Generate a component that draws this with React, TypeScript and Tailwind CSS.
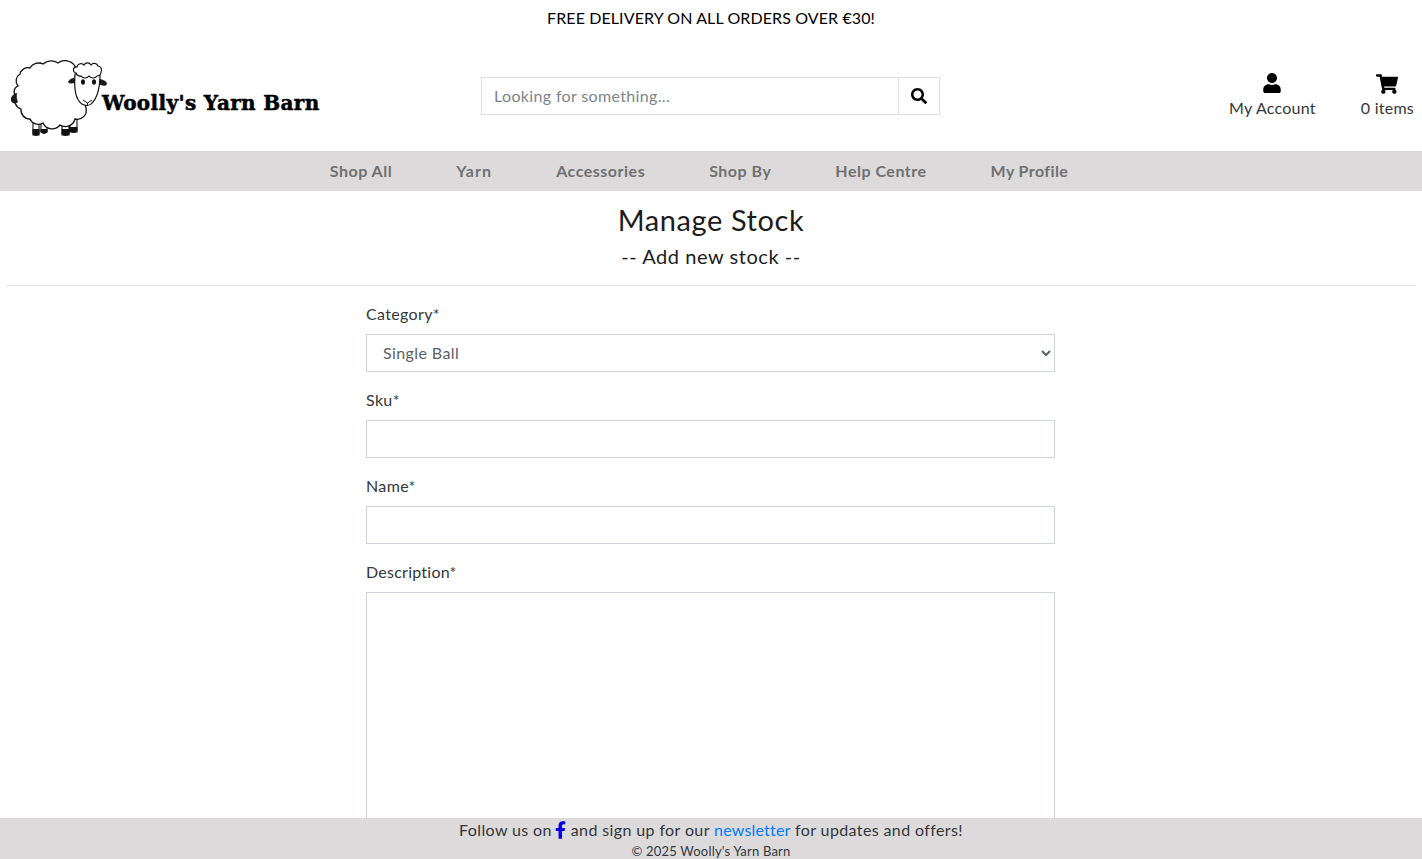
import { FaUser, FaShoppingCart, FaSearch, FaFacebookF } from "react-icons/fa";

const font = "font-['Lato','Noto_Sans',sans-serif]";

function Sheep() {
  return (
    <svg width="100" height="80" viewBox="0 0 100 80" className="shrink-0 overflow-visible">
      <path d="M24 56 L24 75 H30 L30 58 Z M32 58 L32 72 H38 L38 60 Z M53 60 L53 75 H60 L60 60 Z M61 58 L61 72 H68 L68 56 Z" fill="#fff" stroke="#111" strokeWidth="1.1" />
      <path d="M23.5 69 h7 v5 q-3.5 4 -7 0Z M31.5 69 h7 v3 q-3.5 4 -7 0Z M52.5 69 h8 v5 q-4 4 -8 0Z M60.5 67 h8 v4 q-4 4 -8 0Z" fill="#111" />
      <path d="M66 6 A12 12 0 0 0 49 3 A12 12 0 0 0 34 4 A10 10 0 0 0 21 8 A8 8 0 0 0 11 14 A8 8 0 0 0 9 26 A6 6 0 0 0 7 36 A9 9 0 0 0 12 49 A9 9 0 0 0 21 59 A9 9 0 0 0 34 63 A10 10 0 0 0 51 65 A10 10 0 0 0 66 59 A9 9 0 0 0 77 48 L72 20 Z" fill="#fff" stroke="#111" strokeWidth="1.3" />
      <path d="M2 38 C3 35 6 33 8 33 C7 36 8 40 9 42 C6 45 1 43 2 38Z" fill="#1a1a1a" />
      <path d="M59 22 C60 19 65 17 70 17 L70 21 C66 23 61 25 59 22Z" fill="#1a1a1a" />
      <path d="M89 19 C93 19 98 21 98 24 C97 27 92 26 89 23Z" fill="#1a1a1a" />
      <path d="M66 14 C65 28 66 36 70 41 C73 46 80 47 83 43 C88 38 91 28 91 14Z" fill="#fff" stroke="#111" strokeWidth="1.2" />
      <ellipse cx="74" cy="22" rx="2" ry="2.8" fill="#111" />
      <ellipse cx="85" cy="22" rx="2" ry="2.8" fill="#111" />
      <path d="M74 40 L78.5 43 L83 40 M78.5 43 V46" fill="none" stroke="#111" strokeWidth="1" />
      <path d="M68 7 A4 4 0 0 1 75 5 A4 4 0 0 1 82 5 A4 4 0 0 1 89 6 A4 4 0 0 1 92 12 A4 4 0 0 1 88 16 A5 5 0 0 1 80 16 A5 5 0 0 1 72 16 A4 4 0 0 1 67 13 A3 3 0 0 1 68 7Z" fill="#fff" stroke="#111" strokeWidth="1.2" />
    </svg>
  );
}

function Field({ label, select }: { label: string; select?: boolean }) {
  return (
    <div className="mb-[16px]">
      <label className="block h-[24px] mb-[8px] text-[16px] leading-[24px] tracking-[0.35px] text-[#33373b]">{label}</label>
      {select ? (
        <select className="block w-full h-[38px] pb-[2px] border border-[#ced4da] bg-white pl-[12px] text-[16px] tracking-[0.4px] text-[#5a6168]">
          <option>Single Ball</option>
        </select>
      ) : (
        <input className="block w-full h-[38px] border border-[#ced4da] bg-white" />
      )}
    </div>
  );
}

export default function App() {
  return (
    <div className={`${font} h-[859px] overflow-hidden bg-white text-[#33373b]`}>
      <div className="h-[36px] pt-[8px] text-center text-[16px] leading-[19px] tracking-[0.1px] text-black">
        FREE DELIVERY ON ALL ORDERS OVER €30!
      </div>
      <header className="h-[115px] flex items-start">
        <div className="w-[481px] flex items-start pl-[9px] pt-[24px]">
          <Sheep />
          <span className="-ml-[7px] mt-[31px] text-[20px] leading-[24px] font-bold tracking-[0.35px] text-black whitespace-nowrap [-webkit-text-stroke:0.5px_black] font-['DejaVu_Serif',serif]">Woolly's Yarn Barn</span>
        </div>
        <div className="mt-[41px] flex w-[459px] h-[38px] border border-[#dee2e6]">
          <div className="flex-1 pl-[12px] text-[16px] leading-[36px] tracking-[0.35px] text-[#7d858c]">Looking for something...</div>
          <div className="w-[41px] border-l border-[#dee2e6] flex items-center justify-center">
            <FaSearch className="text-[16px] text-black" />
          </div>
        </div>
        <div className="flex-1 flex justify-end pt-[37px] pr-[8px] gap-[45px] text-[16px] leading-[24px] tracking-[0.25px]">
          <div className="flex flex-col items-center">
            <FaUser className="text-[20px] text-black mb-[3px]" />
            <span>My Account</span>
          </div>
          <div className="flex flex-col items-center">
            <FaShoppingCart className="text-[22px] text-black mb-[1px]" />
            <span>0 items</span>
          </div>
        </div>
      </header>
      <nav className="h-[40px] bg-[#dcdadb] flex justify-center items-center gap-[64px] pr-[24px] text-[16px] font-bold tracking-[0.5px] text-[#707070]">
        <span>Shop All</span>
        <span className="tracking-[1.1px]">Yarn</span>
        <span>Accessories</span>
        <span>Shop By</span>
        <span>Help Centre</span>
        <span className="tracking-[0.4px]">My Profile</span>
      </nav>
      <div className="mx-[6px] h-[95px] border-b border-[#e5e7eb] text-center">
        <h1 className="pt-[11px] text-[29px] leading-[36px] tracking-[0.6px] text-[#1c1c1c]">Manage Stock</h1>
        <h2 className="pt-[4px] text-[20px] leading-[28px] tracking-[0.55px] text-[#1c1c1c]">-- Add new stock --</h2>
      </div>
      <form className="ml-[366px] w-[689px] pt-[16px]">
        <Field label="Category*" select />
        <Field label="Sku*" />
        <Field label="Name*" />
        <label className="block h-[24px] mb-[8px] text-[16px] leading-[24px] tracking-[0.25px] text-[#33373b]">Description*</label>
        <textarea className="block w-full h-[300px] border border-[#ced4da] resize-none" />
      </form>
      <footer className="fixed left-0 right-0 bottom-0 h-[41px] bg-[#dcdadb] text-center">
        <p className="text-[16px] leading-[24px] tracking-[0.38px]">
          Follow us on <FaFacebookF className="inline w-[11px] h-[18px] text-[#0000ee] -ml-[1px] -mt-[3px]" /> and sign up for our <span className="text-[#007bff] tracking-[0.2px]">newsletter</span> for updates and offers!
        </p>
        <p className="text-[13px] leading-[16px] tracking-[0.2px] pt-px">© 2025 Woolly's Yarn Barn</p>
      </footer>
    </div>
  );
}
